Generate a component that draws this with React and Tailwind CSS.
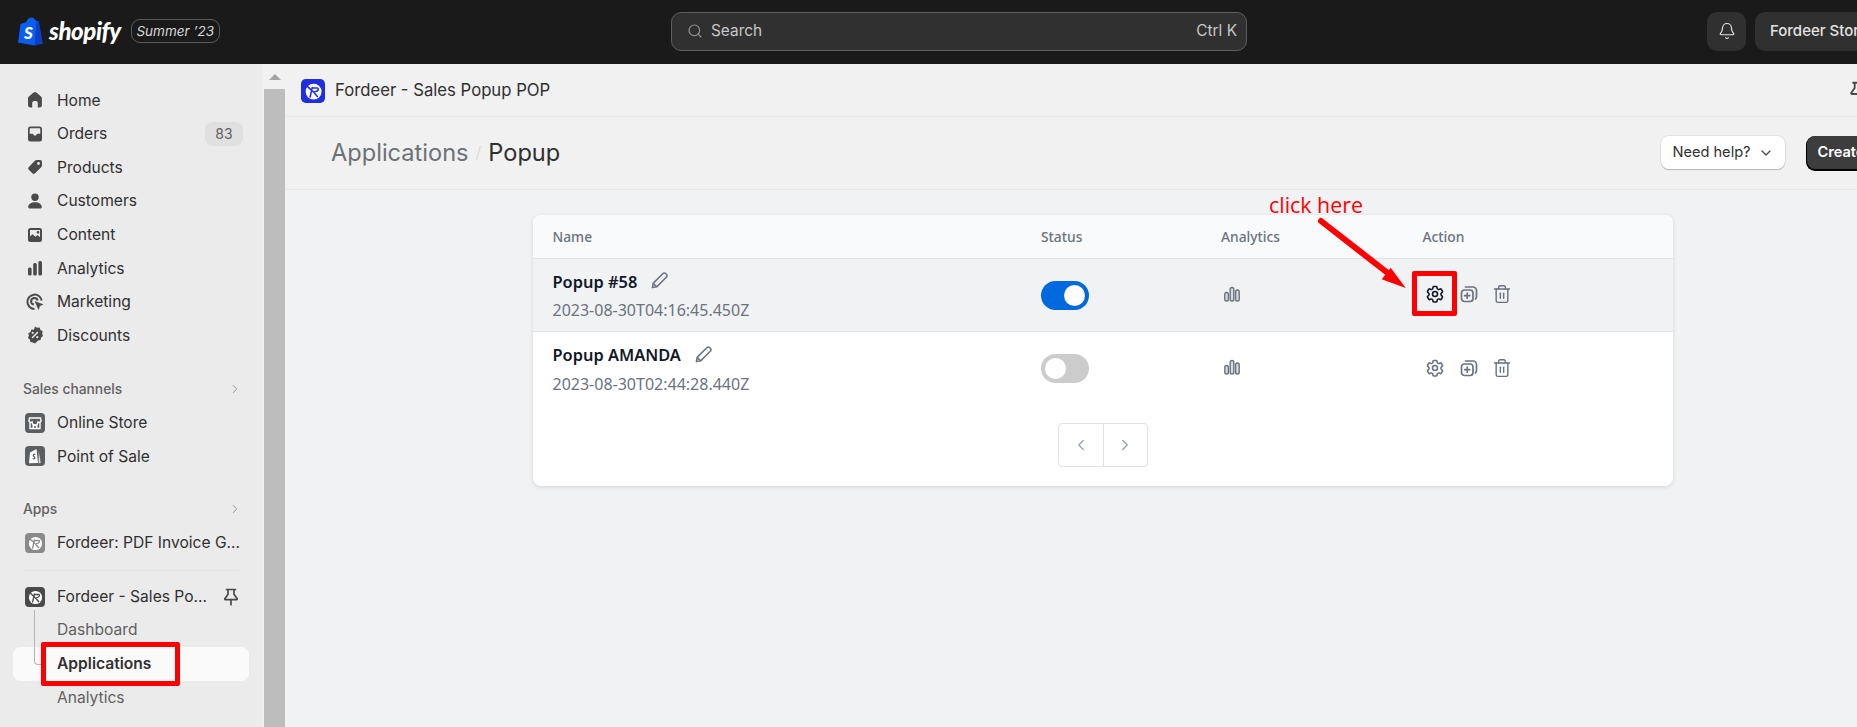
import { Bell, ChevronDown, ChevronLeft, ChevronRight, Search, Trash2 } from "lucide-react";

const inter = "font-['Inter',sans-serif]";

// Polaris-ish nav icons, drawn at 20x20
const HomeIcon = () => (
  <svg viewBox="0 0 20 20" className="h-5 w-5 fill-[#4a4a4a]">
    <path d="M8.600 2.600a2.200 2.200 0 0 1 2.800 0l4.600 4a2.500 2.500 0 0 1 .9 1.900V15a2.500 2.500 0 0 1-2.500 2.500h-1.600V13a2 2 0 0 0-2-2H9.200a2 2 0 0 0-2 2v4.500H5.600A2.500 2.500 0 0 1 3 15V8.500a2.500 2.500 0 0 1 .9-1.900z" />
  </svg>
);
const OrdersIcon = () => (
  <svg viewBox="0 0 20 20" className="h-5 w-5 fill-[#4a4a4a]">
    <path fillRule="evenodd" d="M5.500 2.500h9A2.500 2.500 0 0 1 17 5v10a2.500 2.500 0 0 1-2.500 2.500h-9A2.500 2.500 0 0 1 3 15V5a2.500 2.500 0 0 1 2.500-2.500M5.500 4.300a.8.8 0 0 0-.8.8v4.600h2.600c.6 0 1 .3 1.100.8.2.7.8 1.200 1.600 1.200s1.400-.5 1.600-1.200c.1-.5.500-.8 1.100-.8h2.600V5.100a.8.8 0 0 0-.8-.8z" />
  </svg>
);
const ProductsIcon = () => (
  <svg viewBox="0 0 20 20" className="h-5 w-5 fill-[#4a4a4a]">
    <path fillRule="evenodd" d="M11.500 3H15a2 2 0 0 1 2 2v3.500a2 2 0 0 1-.6 1.400l-6.300 6.300a2 2 0 0 1-2.800 0l-3.500-3.500a2 2 0 0 1 0-2.800L10.100 3.600A2 2 0 0 1 11.500 3m2 4.900a1.400 1.400 0 1 0 0-2.800 1.400 1.400 0 0 0 0 2.800" />
  </svg>
);
const CustomersIcon = () => (
  <svg viewBox="0 0 20 20" className="h-5 w-5 fill-[#4a4a4a]">
    <circle cx="10" cy="6.200" r="3.700" />
    <path d="M10 11.200c3.700 0 6.600 2 6.800 4.500.1 1-.7 1.800-1.700 1.800H4.900c-1 0-1.800-.8-1.700-1.800.2-2.500 3.100-4.500 6.800-4.500" />
  </svg>
);
const ContentIcon = () => (
  <svg viewBox="0 0 20 20" className="h-5 w-5 fill-[#4a4a4a]">
    <path fillRule="evenodd" d="M5.500 3h9A2.500 2.500 0 0 1 17 5.500v9a2.500 2.500 0 0 1-2.500 2.500h-9A2.500 2.500 0 0 1 3 14.500v-9A2.500 2.500 0 0 1 5.500 3M5 5v6.500l2.500-2.300 3 2.600 2-1.800 2.500 2.200V5zm8 3.700a1.400 1.400 0 1 0 0-2.800 1.400 1.400 0 0 0 0 2.800" />
  </svg>
);
const AnalyticsIcon = () => (
  <svg viewBox="0 0 20 20" className="h-5 w-5 fill-[#4a4a4a]">
    <rect x="3" y="9.500" width="3.600" height="8" rx="1.500" />
    <rect x="8.200" y="5" width="3.600" height="12.500" rx="1.500" />
    <rect x="13.400" y="3" width="3.600" height="14.500" rx="1.500" />
  </svg>
);
const MarketingIcon = () => (
  <svg viewBox="0 0 20 20" className="h-5 w-5 fill-none stroke-[#4a4a4a]">
    <path strokeWidth="2" d="M16.700 8.500A7.200 7.200 0 1 0 9.500 17" />
    <path strokeWidth="2" d="M12.600 8.500A3.300 3.300 0 1 0 8.800 12.500" />
    <path className="fill-[#4a4a4a]" strokeWidth="0.500" d="M10 9.500l8 3-3.200 1.300-1.300 3.700z" />
  </svg>
);
const DiscountsIcon = () => (
  <svg viewBox="0 0 20 20" className="h-5 w-5 fill-[#4a4a4a]">
    <path d="M10 1.500l2.100 1.300 2.500-.2.900 2.300 2.200 1.300-.6 2.400.9 2.400-1.900 1.600-.5 2.500-2.500.3L10 18.500l-2.100-1.100-2.500-.3-.5-2.500-1.900-1.600.9-2.400-.6-2.400 2.200-1.300.9-2.300 2.500.2z" />
    <path stroke="#ebebeb" strokeWidth="1.500" strokeLinecap="round" d="M12.500 7.500l-5 5" />
    <circle cx="7.700" cy="7.800" r="1.100" fill="#ebebeb" />
    <circle cx="12.300" cy="12.200" r="1.100" fill="#ebebeb" />
  </svg>
);
const StoreIcon = () => (
  <svg viewBox="0 0 20 20" className="h-5 w-5">
    <rect width="20" height="20" rx="4" fill="#5c5f62" />
    <path fill="none" stroke="#fff" strokeWidth="1.400" d="M5 9.500V15.500h10V9.500M4.500 5h11l.5 3a2 2 0 0 1-3 1 3 3 0 0 1-6 0 2 2 0 0 1-3-1zM8.200 15.500v-3h3.600v3" />
  </svg>
);
const PosIcon = () => (
  <svg viewBox="0 0 20 20" className="h-5 w-5">
    <rect width="20" height="20" rx="4" fill="#5c5f62" />
    <path fill="#fff" d="M5 6.500l6.500-3.500 1.500 14-9 .3z" />
    <path fill="#dfe0e1" d="M13.700 5l2 12-2 .2z" />
    <path fill="none" stroke="#5c5f62" strokeWidth="1.300" d="M10.500 8.500c-2-1-3 1-1.500 2s1 3-1.300 2" />
  </svg>
);
// Fordeer mark: rounded square, white disc, swoosh
const FordeerIcon = ({ bg }) => (
  <svg viewBox="0 0 20 20" className="h-full w-full">
    <rect width="20" height="20" rx="4" fill={bg} />
    <circle cx="10.500" cy="10.500" r="6.600" fill="#fff" />
    <path fill="none" stroke={bg} strokeWidth="1.300" d="M3.500 4.500l6.500 6M9.500 6.500l-2 9M9 7.500h4.500c1 0 1.500 1.500 0 2.500l-3 1 3.500 4" />
  </svg>
);
const PinIcon = ({ className }) => (
  <svg viewBox="0 0 20 20" className={`fill-none stroke-[#4a4a4a] ${className}`} strokeWidth="1.700" strokeLinejoin="round" strokeLinecap="round">
    <path d="M5.500 2.500h9M7 2.500v4.800L3.800 11.800a.6.600 0 0 0 .5.900h11.400a.6.600 0 0 0 .5-.9L13 7.300V2.500" />
    <path d="M10 12.700v5" />
  </svg>
);
const NavRow = ({ icon, label, children }) => (
  <div className="flex h-[33.6px] items-center pr-[19px] pl-[25px]">
    <span className="flex w-[32px] shrink-0 items-center">{icon}</span>
    <span className="flex-1 truncate text-[15.6px] text-[#303030]">{label}</span>
    {children}
  </div>
);
const SectionRow = ({ label }) => (
  <div className="flex h-[33.6px] items-center justify-between pr-[20px] pl-[23px]">
    <span className="text-[13.8px] font-medium text-[#616161]">{label}</span>
    <ChevronRight className="h-[14px] w-[14px] text-[#8a8a8a]" strokeWidth={1.500} />
  </div>
);
const ChartIcon = () => (
  <svg viewBox="0 0 20 20" className="h-5 w-5 fill-[#d8dbe0] stroke-[#6b7280]" strokeWidth="1.400">
    <rect x="2.800" y="8.500" width="3.600" height="8.500" rx="1.800" />
    <rect x="8.200" y="3.500" width="3.600" height="13.500" rx="1.800" />
    <rect x="13.600" y="6" width="3.600" height="11" rx="1.800" />
  </svg>
);
const PencilIcon = () => (
  <svg viewBox="0 0 20 20" className="mb-[3px] h-[19px] w-[19px] fill-none stroke-[#6b7280]" strokeWidth="1.600" strokeLinejoin="round">
    <path d="M2.500 17.500l.8-4.500L13.700 2.600a1.900 1.900 0 0 1 2.700 0l1 1a1.900 1.900 0 0 1 0 2.700L7 16.700z" />
    <path d="M3.300 13l3.700 3.700" />
  </svg>
);
const GearIcon = ({ color }) => (
  <svg viewBox="0 0 24 24" className="h-[20px] w-[20px] fill-none" stroke={color} strokeWidth="1.900" strokeLinejoin="round">
    <path d="M9.600 3.900c.1-.5.600-.9 1.100-.9h2.600c.5 0 1 .4 1.100.9l.2 1.300c.1.400.4.700.7.900l.5.300c.3.200.8.200 1.100.1l1.300-.5c.5-.2 1.100 0 1.400.5l1.300 2.200c.3.500.2 1.100-.3 1.400l-1 .9c-.3.200-.5.600-.5 1v.6c0 .4.200.8.500 1l1 .9c.4.300.5.900.3 1.400l-1.300 2.200c-.3.500-.9.700-1.400.5l-1.300-.5c-.3-.1-.8-.1-1.100.1l-.5.300c-.3.200-.6.500-.7.900l-.2 1.300c-.1.500-.6.900-1.100.9h-2.600c-.5 0-1-.4-1.100-.9l-.2-1.300c-.1-.4-.4-.7-.7-.9l-.5-.3c-.3-.2-.8-.2-1.100-.1l-1.300.5c-.5.200-1.100 0-1.400-.5l-1.300-2.200c-.3-.5-.2-1.100.3-1.400l1-.9c.3-.2.500-.6.500-1v-.6c0-.4-.2-.8-.5-1l-1-.9c-.4-.3-.5-.9-.3-1.400l1.300-2.200c.3-.5.900-.7 1.400-.5l1.300.5c.3.100.8.100 1.100-.1l.5-.3c.3-.2.600-.5.700-.9z" />
    <circle cx="12" cy="12" r="3" />
  </svg>
);
const DuplicateIcon = () => (
  <svg viewBox="0 0 20 20" className="h-5 w-5 fill-none stroke-[#6b7280]" strokeWidth="1.700" strokeLinecap="round">
    <rect x="2.500" y="6" width="11.500" height="11.500" rx="3" />
    <path d="M6.500 3h7.500a3.500 3.500 0 0 1 3.500 3.500v6c0 1-.4 1.900-1 2.500" />
    <path d="M8.200 9.200v5M5.700 11.700h5" />
  </svg>
);

const rows = [
  { name: "Popup #58", date: "2023-08-30T04:16:45.450Z", on: true },
  { name: "Popup AMANDA", date: "2023-08-30T02:44:28.440Z", on: false },
];
const columns = "grid grid-cols-[488px_180px_201px_1fr]";

export default function App() {
  return (
    <div className={`relative h-[727px] w-[1857px] overflow-hidden ${inter}`}>
      <div className="flex h-full w-[1921px] flex-col">
        {/* Top bar */}
        <header className="grid h-[64px] shrink-0 grid-cols-[1fr_576px_1fr] items-center bg-[#1a1a1a] pr-[3px] pb-[2px]">
          <div className="flex items-center pl-[18px]">
            <svg viewBox="0 0 25 29" className="h-[29px] w-[25px]">
              <path fill="#0b5ff0" d="M2.500 7l6-2C9.500 2 11.500.500 13.500.500c2 0 3.500 1.500 4 3l1.500.200L21 8l3.500 18.500-8 2L0 25.500z" />
              <path fill="#0a3fc4" d="M18.500 3.700l1.800.2c.3 0 .5.200.5.400L24.700 26l-8.200 2.400z" />
              <path fill="none" stroke="#0b5ff0" strokeWidth="1" d="M9 5c.3-2 2-3.500 3.500-3.500S15 3 15 5" />
              <text x="6" y="22" fill="#fff" fontSize="17" fontWeight="900" fontStyle="italic" fontFamily="Lato, sans-serif">S</text>
            </svg>
            <span className="ml-[6px] font-['Lato',sans-serif] text-[24px] leading-none font-black tracking-[-0.4px] text-white italic">shopify</span>
            <span className="ml-[10px] flex h-[24px] w-[89px] items-center justify-center rounded-[9px] border border-[#5c5c5c] text-[13.5px] text-[#d8d8d8] italic">Summer ’23</span>
          </div>
          <div className="flex h-[39px] items-center rounded-[10px] border border-[#5e5e5e] bg-[#303030] pr-[9px] pl-[15px] text-[15.4px] text-[#c7c7c7]">
            <Search className="h-[16px] w-[16px] text-[#8f8f8f]" strokeWidth={1.800} />
            <span className="ml-[8px] flex-1">Search</span>
            <span>Ctrl K</span>
          </div>
          <div className="flex items-center justify-end pr-[18px]">
            <span className="flex h-[39px] w-[39px] items-center justify-center rounded-[10px] bg-[#303030]">
              <Bell className="h-[18px] w-[18px] text-[#e3e3e3]" strokeWidth={1.600} />
            </span>
            <span className="ml-[9px] flex h-[39px] w-[145px] items-center rounded-[10px] bg-[#303030] pl-[15px] text-[15px] font-medium whitespace-nowrap text-[#e3e3e3]">Fordeer Store</span>
          </div>
        </header>

        <div className="flex min-h-0 flex-1">
          {/* Sidebar */}
          <aside className="w-[262px] shrink-0 bg-[#ebebeb] pt-[19.5px]">
            <NavRow icon={<HomeIcon />} label="Home" />
            <NavRow icon={<OrdersIcon />} label="Orders">
              <span className="flex h-[24px] w-[38px] items-center justify-center rounded-[8px] bg-[#e0e0e0] text-[14px] text-[#616161]">83</span>
            </NavRow>
            <NavRow icon={<ProductsIcon />} label="Products" />
            <NavRow icon={<CustomersIcon />} label="Customers" />
            <NavRow icon={<ContentIcon />} label="Content" />
            <NavRow icon={<AnalyticsIcon />} label="Analytics" />
            <NavRow icon={<MarketingIcon />} label="Marketing" />
            <NavRow icon={<DiscountsIcon />} label="Discounts" />

            <div className="mt-[20px]">
              <SectionRow label="Sales channels" />
              <NavRow icon={<StoreIcon />} label="Online Store" />
              <NavRow icon={<PosIcon />} label="Point of Sale" />
            </div>

            <div className="mt-[19.5px]">
              <SectionRow label="Apps" />
              <NavRow icon={<span className="block h-5 w-5"><FordeerIcon bg="#8a8a8a" /></span>} label="Fordeer: PDF Invoice G..." />
            </div>

            <div className="mx-[23px] mt-[10px] h-px bg-[#e3e3e3]" />

            <div className="relative mt-[9px]">
              <NavRow icon={<span className="block h-5 w-5"><FordeerIcon bg="#4a4a4a" /></span>} label="Fordeer - Sales Po...">
                <span className="mr-[2px]"><PinIcon className="h-[20px] w-[20px]" /></span>
              </NavRow>
              <div className="absolute top-[30px] left-[34px] h-[55px] w-[12px] rounded-bl-[4px] border-b border-l border-[#b5b5b5]" />
              <div className="flex h-[33.6px] items-center pl-[57px] text-[15.6px] text-[#616161]">Dashboard</div>
              <div className="mx-[13px] flex h-[33.6px] items-center rounded-[8px] bg-[#fafafa] pl-[44px] text-[15.6px] font-semibold text-[#303030]">Applications</div>
              <div className="flex h-[33.6px] items-center pl-[57px] text-[15.6px] text-[#616161]">Analytics</div>
            </div>
          </aside>

          {/* Scrollbar */}
          <div className="flex w-[23px] shrink-0 flex-col bg-[#f1f1f1] pl-[2px]">
            <div className="flex h-[25px] items-center justify-center">
              <div className="h-0 w-0 border-x-[6px] border-b-[6px] border-x-transparent border-b-[#a3a3a3]" />
            </div>
            <div className="flex-1 bg-[#bdbdbd]" />
          </div>

          {/* Main */}
          <main className="flex min-w-0 flex-1 flex-col bg-[#f1f2f4]">
            <div className="flex h-[53px] shrink-0 items-center justify-between border-b border-[#e6e6e6] bg-[#f1f1f1] pt-[2px] pr-[52px] pl-[16px]">
              <div className="flex items-center">
                <span className="block h-[24px] w-[24px]"><FordeerIcon bg="#1f2fe0" /></span>
                <span className="ml-[10px] text-[16.7px] text-[#303030]">Fordeer - Sales Popup POP</span>
              </div>
              <PinIcon className="h-[22px] w-[22px]" />
            </div>
            <div className="flex h-[73px] shrink-0 items-center justify-between border-b border-[#e6e6e6] bg-[#f1f1f1] px-[46px] pb-[1px]">
              <div className="flex items-center text-[23.6px]">
                <span className="text-[#6d7175]">Applications</span>
                <span className="mx-[7px] text-[16px] text-[#dcdcdc]">/</span>
                <span className="text-[#303030]">Popup</span>
              </div>
              <div className="flex items-center gap-[22px]">
                <button className="flex h-[33px] w-[124px] items-center justify-center gap-[7px] rounded-[8px] bg-white text-[14.6px] text-[#303030] shadow-[0_1px_1px_#b5b5b5,0_0_0_1px_#e3e3e3]">
                  Need help?
                  <ChevronDown className="h-[16px] w-[16px] text-[#4a4a4a]" strokeWidth={2} />
                </button>
                <button className="flex h-[33px] w-[68px] items-center justify-center rounded-[8px] bg-[#3d3d3d] text-[14.6px] font-semibold text-white shadow-[0_1px_0_1px_#000]">Create</button>
              </div>
            </div>

            {/* Card */}
            <div className="mx-auto mt-[25px] w-[1140px] font-['Noto_Sans',sans-serif]">
              <div className="overflow-hidden rounded-[8px] bg-white shadow-[0_1px_4px_rgba(0,0,0,0.12)]">
                <div className={`${columns} h-[44px] items-center border-b border-[#dfe3e8] bg-[#f9fafb] pt-[1px] text-[13.8px] font-medium text-[#6b7280]`}>
                  <span className="pl-[19.5px]">Name</span>
                  <span className="pl-[20px]">Status</span>
                  <span className="pl-[20px]">Analytics</span>
                  <span className="pl-[20.5px]">Action</span>
                </div>
                {rows.map((r) => (
                  <div key={r.name} className={`${columns} h-[73px] items-center ${r.on ? "border-b border-[#dfe3e8] bg-[#f1f2f4]" : "bg-white"}`}>
                    <div className="pt-[2px] pl-[19.5px]">
                      <div className="flex h-[26px] items-center gap-[13px]">
                        <span className="text-[16.4px] font-semibold text-[#111827]">{r.name}</span>
                        <PencilIcon />
                      </div>
                      <div className="mt-[2px] text-[16px] leading-[26px] text-[#6b7280]">{r.date}</div>
                    </div>
                    <div className="pl-[20px]">
                      <div className={`flex h-[29px] w-[48px] items-center rounded-full px-[4px] ${r.on ? "justify-end bg-[#0069de]" : "justify-start bg-[#cccccc]"}`}>
                        <span className="h-[21px] w-[21px] rounded-full bg-white" />
                      </div>
                    </div>
                    <div className="pb-[3px] pl-[21px]"><ChartIcon /></div>
                    <div className="flex items-center gap-[13.5px] pb-[2px] pl-[23px]">
                      <GearIcon color={r.on ? "#111827" : "#6b7280"} />
                      <DuplicateIcon />
                      <Trash2 className="h-[20px] w-[20px] text-[#6b7280]" strokeWidth={1.700} />
                    </div>
                  </div>
                ))}
                <div className="flex justify-center pt-[18px] pb-[19px]">
                  <div className="flex h-[44px] w-[90px] rounded-[4px] border border-[#dfe3e8]">
                    <span className="flex flex-1 items-center justify-center border-r border-[#dfe3e8]">
                      <ChevronLeft className="h-[18px] w-[18px] text-[#9ca3af]" strokeWidth={1.800} />
                    </span>
                    <span className="flex flex-1 items-center justify-center">
                      <ChevronRight className="h-[18px] w-[18px] text-[#9ca3af]" strokeWidth={1.800} />
                    </span>
                  </div>
                </div>
              </div>
            </div>
          </main>
        </div>
      </div>

      {/* Red annotations drawn over the page */}
      <div className="absolute top-[642px] left-[41px] h-[44px] w-[139px] rounded-[2px] border-[5px] border-[#ff0000]" />
      <div className="absolute top-[271px] left-[1412px] h-[45px] w-[45px] rounded-[2px] border-[5px] border-[#ff0000]" />
      <span className="absolute top-[191px] left-[1269px] font-['Open_Sans',sans-serif] text-[21.4px] leading-[28px] text-[#ff0000]">click here</span>
      <svg className="absolute top-[215px] left-[1315px] h-[80px] w-[95px]" viewBox="0 0 95 80">
        <path d="M6 6L74 59" stroke="#ff0000" strokeWidth="6" strokeLinecap="round" />
        <path d="M90.700 73L75.700 52.700 66.700 64.300z" fill="#ff0000" />
      </svg>
    </div>
  );
}
